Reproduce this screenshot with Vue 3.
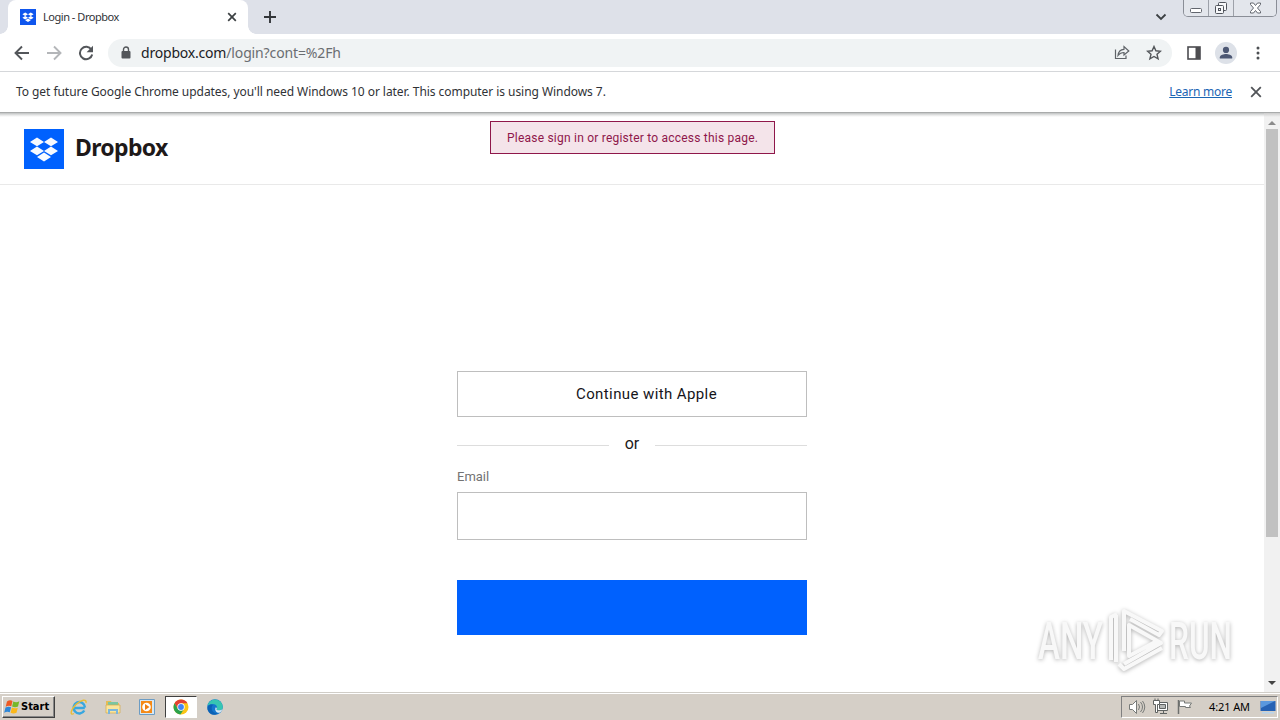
<template>
  <div class="screen">
    <header class="tab-strip">
      <div class="tab">
        <svg class="favicon" viewBox="0 0 40 40"><rect width="40" height="40" fill="#0f56ee" /><path :d="boxMark" fill="#fff" /></svg>
        <span class="tab-title">Login - Dropbox</span>
        <svg class="tab-close" viewBox="0 0 10 10"><path d="M1.2 1.2l7.6 7.6M8.8 1.2L1.2 8.800" stroke="#3c4043" stroke-width="1.700" /></svg>
      </div>
      <svg class="new-tab" viewBox="0 0 12 12"><path d="M6 0v12M0 6h12" stroke="#33363a" stroke-width="1.900" /></svg>
      <svg class="tab-search" viewBox="0 0 12 8"><path d="M1.500 1.500L6 6l4.500-4.500" fill="none" stroke="#3c4043" stroke-width="1.800" /></svg>
      <div class="window-buttons">
        <button type="button"><svg width="14" height="6" viewBox="0 0 14 6"><rect x="1.500" y=".5" width="11" height="4" rx="1" fill="#fff" stroke="#62666e" /></svg></button>
        <button type="button"><svg width="14" height="14" viewBox="0 0 14 14" fill="#f7f8fa" stroke="#50545c"><rect x="4.500" y="1.500" width="8" height="8" rx="1" /><rect x="1.500" y="4.500" width="8" height="8" rx="1" /><rect x="4.500" y="7.500" width="2" height="2" /></svg></button>
        <button type="button" class="wide"><svg width="13" height="12" viewBox="0 0 13 12"><path d="M1.500 1h3l2 2.500 2-2.500h3v1.500L8.500 6l3 3.500V11h-3l-2-2.500-2 2.500h-3V9.500l3-3.500-3-3.500z" fill="#fff" stroke="#62666e" /></svg></button>
      </div>
    </header>

    <nav class="toolbar">
      <svg width="16" height="16" viewBox="0 0 16 16" fill="none" stroke="#53565a" stroke-width="1.900"><path d="M15 8H2M8 1.500L1.500 8 8 14.500" /></svg>
      <svg width="16" height="16" viewBox="0 0 16 16" fill="none" stroke="#b4b6b9" stroke-width="1.900"><path d="M1 8h13M8 1.500L14.500 8 8 14.500" /></svg>
      <svg width="16" height="16" viewBox="0 0 16 16"><path d="M13.400 4.700A6.200 6.200 0 1 0 14.200 9.500" fill="none" stroke="#53565a" stroke-width="2" /><path d="M15 .8v6.400H8.600z" fill="#53565a" /></svg>
      <div class="address">
        <svg width="10" height="13" viewBox="0 0 10 13"><rect x=".5" y="5" width="9" height="7.500" rx="1" fill="#53565a" /><path d="M2.500 5.500V3.500a2.500 2.500 0 0 1 5 0v2" fill="none" stroke="#53565a" stroke-width="1.400" /></svg>
        <span class="url"><span class="host">dropbox.com</span><span class="path">/login?cont=%2Fh</span></span>
        <svg class="share" width="16" height="15" viewBox="0 0 16 15" fill="none" stroke="#5f6368" stroke-width="1.200"><path d="M1.500 4.500v9H12v-3" /><path d="M4 10.500c.4-4 2.500-6 6-6.200V1.600L14.800 6 10 10V7.500c-2.800 0-4.500 1-6 3z" /></svg>
        <svg class="star" width="16" height="16" viewBox="0 0 16 16"><path d="M8 1.500l1.900 4.300 4.600.4-3.500 3.100 1.100 4.600L8 11.500l-4.100 2.400L5 9.300 1.500 6.200l4.600-.4z" fill="none" stroke="#53565a" stroke-width="1.400" /></svg>
      </div>
      <svg class="side-panel" width="14" height="14" viewBox="0 0 14 14"><rect x="1" y="1" width="12" height="12" fill="#fff" stroke="#4c4c50" stroke-width="1.600" /><path d="M8.500 1H13v12H8.500z" fill="#4c4c50" /></svg>
      <svg class="avatar" width="22" height="22" viewBox="0 0 22 22"><circle cx="11" cy="11" r="11" fill="#dde1e8" /><circle cx="11" cy="7.900" r="3.100" fill="#4d5874" /><path d="M4.800 16.500v-1.300c0-2.200 4.100-3.200 6.200-3.200s6.200 1 6.200 3.200v1.300z" fill="#4d5874" /></svg>
      <svg class="menu-dots" width="4" height="14" viewBox="0 0 4 14" fill="#4c4f53"><circle cx="2" cy="2" r="1.500" /><circle cx="2" cy="7" r="1.500" /><circle cx="2" cy="12" r="1.500" /></svg>
    </nav>

    <div class="infobar">
      <span class="info-text">To get future Google Chrome updates, you'll need Windows 10 or later. This computer is using Windows 7.</span>
      <a class="learn">Learn more</a>
      <svg width="12" height="12" viewBox="0 0 12 12"><path d="M1.200 1.200l9.600 9.600M10.800 1.200l-9.600 9.600" stroke="#515458" stroke-width="1.800" /></svg>
    </div>

    <div class="viewport">
      <main class="page">
        <div class="brand-bar">
          <svg width="40" height="40" viewBox="0 0 40 40"><rect width="40" height="40" fill="#0061fe" /><path :d="boxMark" fill="#f7faff" /></svg>
          <span class="wordmark">Dropbox</span>
        </div>
        <form class="login">
          <button class="apple" type="button"><span>Continue with Apple</span></button>
          <div class="divider"><span class="or">or</span></div>
          <label for="email">Email</label>
          <input id="email" type="email">
          <button class="submit" type="submit"></button>
        </form>
        <div class="notice"><span>Please sign in or register to access this page.</span></div>
        <svg class="watermark" width="212" height="76" viewBox="0 0 212 76">
          <g class="mark">
            <text x="7" y="54" textLength="65" lengthAdjust="spacingAndGlyphs">ANY</text>
            <text x="138" y="54" textLength="63" lengthAdjust="spacingAndGlyphs">RUN</text>
            <path d="M80 55V12l6-3M85 57V10M93 46V6l38 20-3 4-29-16" />
            <path d="M93 59l37-21-32-18v31l28-15M88 59l5 5 38-21" />
          </g>
        </svg>
      </main>
      <aside class="scrollbar">
        <svg width="8" height="4" viewBox="0 0 8 4"><path d="M0 4l4-4 4 4z" fill="#8a8a8a" /></svg>
        <div class="thumb"></div>
        <svg width="8" height="4" viewBox="0 0 8 4"><path d="M0 0h8L4 4z" fill="#444" /></svg>
      </aside>
    </div>

    <footer class="taskbar">
      <button class="start" type="button">
        <svg width="17" height="16" viewBox="0 0 17 16"><path d="M3 2.500Q6 .5 8.500 2L7.300 7.200Q4.500 6 1.700 7.800z" fill="#ee5a24" /><path d="M9.300 2.500q3 1.500 6-.2l-1.300 5.200q-3 1.500-5.900 0z" fill="#76b82a" /><path d="M1.500 8.600Q4.300 7 7.100 8.200L5.800 13.300Q3 12 .2 13.800z" fill="#2f87d8" /><path d="M7.900 8.600q3 1.400 5.900.1l-1.300 5.100q-3 1.500-5.900 0z" fill="#fbb81b" /></svg>
        <span>Start</span>
      </button>
      <div class="launchers">
        <div class="launcher"><svg width="18" height="18" viewBox="0 0 18 18"><path d="M14.800 10H5M14.300 12.500A5.700 5.700 0 1 1 15 9.500" fill="none" stroke="#38a7e0" stroke-width="2.500" /><path d="M4 15.500C-.5 18 .5 12 6 6.500 11 1.500 17 .5 16 5" fill="none" stroke="#e9bd35" stroke-width="1.400" /></svg></div>
        <div class="launcher"><svg width="18" height="18" viewBox="0 0 18 18"><path d="M2 3h5l1 2h7v10H2z" fill="#e6bd55" /><path d="M4 4h10v4H4z" fill="#79c6a2" /><path d="M2 7h14v8H2z" fill="#f9e59c" stroke="#d5aa4b" stroke-width=".7" /><path d="M5 16v-4h8v4" fill="none" stroke="#7bb6dc" stroke-width="2" /></svg></div>
        <div class="launcher"><svg width="18" height="18" viewBox="0 0 18 18"><path d="M1.500 1.500h15v15h-15z" fill="#d7e8f5" stroke="#6c9cc4" /><path d="M3 3h11v12H3z" fill="#f58a18" /><circle cx="8.500" cy="9" r="4.300" fill="#fff" /><path d="M7 6v6l4.500-3z" fill="#ed7e13" /></svg></div>
        <div class="launcher active"><svg width="16" height="16" viewBox="0 0 16 16"><circle cx="8" cy="8" r="7.500" fill="#fbc516" /><path d="M1.500 4.300A7.500 7.500 0 0 1 14.500 4.300H8L4.800 9.800z" fill="#e34133" /><path d="M1.500 4.300A7.500 7.500 0 0 0 7.400 15.500L11.200 9.800 8 11.500 4.800 9.800z" fill="#2ba24c" /><circle cx="8" cy="8" r="3.700" fill="#fff" /><circle cx="8" cy="8" r="2.900" fill="#4285f4" /></svg></div>
        <div class="launcher"><svg width="18" height="18" viewBox="0 0 18 18"><circle cx="9" cy="9" r="7.800" fill="#1476ce" /><path d="M1.300 8A7.800 7.800 0 0 1 16.800 9c0 3-2.500 3.500-5 3.300-1.500-.1-1.500-.8-1-1.500C12 9 10 6 7 6 4 6 2 7 1.300 8z" fill="#37c6b2" /><path d="M7 7c-3 2.500-1 8.500 5 8.500-4 2.500-9 1-10.300-3.500C.8 8 4 5.500 7 7z" fill="#0a61b5" /><path d="M10.800 10.800c-.5.700-.5 1.400 1 1.500 2 .2 4-.1 4.700-1.500-.5 2-1.700 3.500-3 4-3 .2-5-2-4-5 .2-.5 1.500 0 1.300 1z" fill="#d8eaf3" /></svg></div>
      </div>
      <div class="tray">
        <svg width="18" height="16" viewBox="0 0 18 16" fill="none" stroke="#777a78"><path d="M1.500 5.500h3l4-4v13l-4-4h-3z" fill="#fff" /><path d="M10.500 5q2 3 0 6M12.500 3q4 5 0 10M14.500 2q4.500 6 0 12" /></svg>
        <svg width="18" height="17" viewBox="0 0 18 17" fill="#fff" stroke="#5f6261"><path d="M5.500 4.500h10v8h-10z" /><path d="M7.500 6.500h6v4h-6z" fill="#b6b8b6" /><path d="M8 15.500h7M11.500 13v2" /><path d="M1.500 2.500h6v4h-2v8h-2v-8h-2zM3 .5v2M6 .5v2" /></svg>
        <svg width="18" height="16" viewBox="0 0 18 16"><path d="M2.500 1v14" stroke="#6d6f6d" stroke-width="1.500" /><path d="M3.500 2h5v2h7l-2 3 1 1.500h-5v-1h-6z" fill="#fff" stroke="#777a78" /></svg>
        <span class="clock">4:21 AM</span>
        <svg class="desktop-icon" width="16" height="14" viewBox="0 0 16 14"><path d="M.5 1h15v10H.5z" fill="#2662b4" /><path d="M1 1h14L1 8z" fill="#5a98de" /><path d="M2 12h12v1.500H2z" fill="#b8d4ec" /></svg>
      </div>
    </footer>
  </div>
</template>

<script setup>
// five diamonds on a 40px tile
const boxMark = 'M13 8.500l7 4.400-7 4.400-7-4.400zM27 8.500l7 4.400-7 4.400-7-4.400zM13 17.500l7 4.400-7 4.400-7-4.400zM27 17.500l7 4.400-7 4.400-7-4.400zM20 23.600l7 4.400-7 4.400-7-4.400z'
</script>

<style>
body { margin: 0; overflow: hidden; }
</style>

<style scoped>
* { box-sizing: border-box; }
svg { display: block; flex: none; }
button { font: inherit; }
.screen { width: 1280px; height: 720px; display: flex; flex-direction: column; overflow: hidden; background: #fff; font-family: "Noto Sans", sans-serif; color: #303236; white-space: nowrap; }
.tab-strip { height: 34px; flex: none; display: flex; align-items: flex-start; background: #dee1e9; }
.tab { position: relative; width: 240px; height: 34px; margin-left: 8px; padding: 0 11px 0 12px; display: flex; align-items: center; background: #fff; border-radius: 8px 8px 0 0; }
.tab::before, .tab::after { content: ""; position: absolute; bottom: 0; width: 8px; height: 8px; }
.tab::before { left: -8px; background: radial-gradient(circle at 0 0, transparent 7.5px, #fff 8px); }
.tab::after { right: -8px; background: radial-gradient(circle at 100% 0, transparent 7.5px, #fff 8px); }
.favicon { width: 16px; height: 16px; }
.tab-title { margin-left: 7px; padding-bottom: 1px; font-size: 11px; letter-spacing: -.47px; }
.tab-close { width: 10px; height: 10px; margin-left: auto; }
.new-tab { width: 12px; height: 12px; margin: 11px 0 0 16px; }
.tab-search { width: 12px; height: 8px; margin: 13px 16px 0 auto; }
.window-buttons { display: flex; height: 17px; margin-right: 3px; border: 1px solid #8a8e97; border-top: 0; border-radius: 0 0 5px 5px; overflow: hidden; }
.window-buttons button { width: 25px; height: 16px; padding: 0; display: flex; align-items: center; justify-content: center; border: 0; border-right: 1px solid #9da1a9; background: #e3e6ec; }
.window-buttons button:first-child { padding-top: 5px; }
.window-buttons button.wide { width: 42px; border-right: 0; }
.toolbar { height: 38px; flex: none; display: flex; align-items: center; gap: 16px; padding: 0 20px 0 14px; border-bottom: 1px solid #d5d7da; }
.address { width: 1064px; height: 28px; margin-left: -2px; padding: 0 10px 0 13px; display: flex; align-items: center; border-radius: 14px; background: #f0f3f4; }
.url { margin-left: 10px; font-size: 14px; }
.host { color: #202124; letter-spacing: -.2px; }
.path { color: #6a6d71; letter-spacing: -.13px; }
.share { margin-left: auto; }
.star { margin-left: 16px; }
.side-panel { margin-left: -1px; }
.avatar { margin-left: -2px; }
.menu-dots { margin-left: 3px; }
.infobar { height: 40px; flex: none; display: flex; align-items: center; padding: 0 18px 0 16px; font-size: 12px; }
.info-text { padding-bottom: 2px; letter-spacing: -.055px; }
.learn { margin-left: auto; margin-right: 18px; padding-bottom: 2px; color: #1b65b4; text-decoration: underline; letter-spacing: -.25px; }
.viewport { flex: 1; min-height: 0; display: flex; border-top: 1px solid #a9abab; background: linear-gradient(#bfc1c1, #e4e5e5 2px, #fff 4px); }
.page { position: relative; flex: 1; font-family: Roboto, sans-serif; }
.brand-bar { height: 72px; padding: 16px 0 0 24px; display: flex; border-bottom: 1px solid #e9e9e9; }
.wordmark { margin-left: 11px; font: 700 23px/37px "Noto Sans", sans-serif; letter-spacing: -.65px; color: #1e1919; }
.login { width: 350px; margin: 186px 0 0 457px; display: flex; flex-direction: column; }
.apple { height: 46px; padding: 0; border: 1px solid #bebebe; background: #fff; color: #15151a; font-size: 15px; }
.apple span { margin-left: 29px; letter-spacing: .4px; }
.divider { height: 51px; display: flex; align-items: center; gap: 16px; color: #1e1919; font-size: 16px; }
.divider .or { padding-top: 1px; }
.divider::before, .divider::after { content: ""; flex: 1; height: 1px; margin-top: 5px; background: #ddd; }
label { height: 24px; line-height: 17px; font-size: 13px; color: #737373; }
input { height: 48px; border: 1px solid #bebebe; border-radius: 0; background: #fff; }
.submit { height: 55px; margin-top: 40px; border: 0; background: #0061fe; }
.notice { position: absolute; left: 490px; top: 8px; width: 285px; height: 33px; border: 1px solid #8f174a; background: #f4e4ea; color: #8f174a; font-size: 12px; line-height: 32px; padding-left: 16px; letter-spacing: .22px; }
.watermark { position: absolute; left: 1031px; top: 492px; }
.mark { filter: drop-shadow(0 1px 2px rgba(0, 0, 0, .3)); }
.mark text { font: 500 52px Roboto, sans-serif; fill: #f8f8f8; }
.mark path { fill: none; stroke: #f8f8f8; stroke-width: 4; stroke-linejoin: round; }
.scrollbar { width: 16px; padding: 8px 0 7px; display: flex; flex-direction: column; align-items: center; background: linear-gradient(#ccc, #f1f1f1 4px); }
.thumb { width: 12px; height: 408px; margin: 4px 0 auto; background: #c1c1c1; }
.taskbar { height: 28px; flex: none; display: flex; align-items: center; padding: 2px 2px 2px; background: #d5cfc7; border-top: 1px solid #d0cdc7; box-shadow: inset 0 1px #fff; }
.start { width: 53px; height: 22px; display: flex; align-items: center; gap: 0; padding: 0 1px; border: 1px solid; border-color: #fff #404040 #404040 #fff; box-shadow: inset -1px -1px #888; background: #d5cfc7; color: #000; font: 700 11px "DejaVu Sans Condensed", "DejaVu Sans", sans-serif; }
.launchers { margin-left: 8px; display: flex; gap: 2px; }
.launcher { width: 32px; height: 22px; display: flex; align-items: center; justify-content: center; }
.active { border: 1px solid; border-color: #404040 #fff #fff #404040; background: #fff; }
.tray { width: 157px; height: 22px; margin-left: auto; padding: 0 1px 0 6px; display: flex; align-items: center; gap: 6px; border: 1px solid; border-color: #808080 #fff #fff #808080; color: #000; font-size: 11px; }
.clock { margin-left: 9px; letter-spacing: -.1px; }
.desktop-icon { margin-left: auto; }
</style>
